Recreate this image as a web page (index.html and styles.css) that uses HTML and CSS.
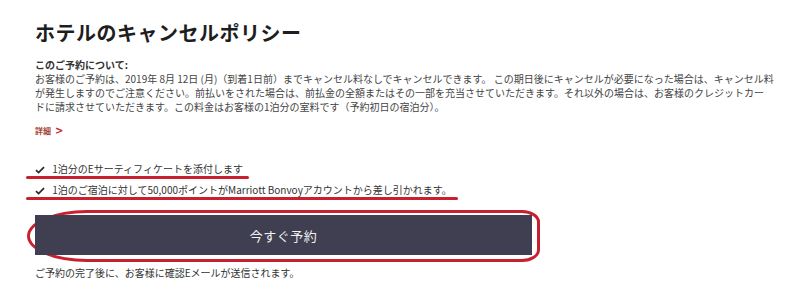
FILE: index.html
```html
<!DOCTYPE html>
<html lang="ja">
<head>
	<meta charset="UTF-8">
	<title>ホテルのキャンセルポリシー</title>
	<link rel="stylesheet" href="styles.css">
</head>
<body>
	<div id="policy">
		<h1 class="title">ホテルのキャンセルポリシー</h1>

		<div class="about">
			<p class="about-head">このご予約について:</p>
			<p class="about-text">お客様のご予約は、2019年 8月 12日 (月)（到着1日前）までキャンセル料なしでキャンセルできます。 この期日後にキャンセルが必要になった場合は、キャンセル料<br>が発生しますのでご注意ください。前払いをされた場合は、前払金の全額またはその一部を充当させていただきます。それ以外の場合は、お客様のクレジットカー<br>ドに請求させていただきます。この料金はお客様の1泊分の室料です（予約初日の宿泊分）。</p>
		</div>

		<a class="more" href="#">詳細<span class="arrow">&gt;</span></a>

		<ul class="perks">
			<li><span class="mark">
				<svg class="check" width="10" height="8" viewBox="0 0 10 8"><path d="M1 4.2 L3.6 6.6 L9 1.2" fill="none" stroke="#2b2b2b" stroke-width="1.8"/></svg>
				1泊分のEサーティフィケートを添付します</span></li>
			<li><span class="mark">
				<svg class="check" width="10" height="8" viewBox="0 0 10 8"><path d="M1 4.2 L3.6 6.6 L9 1.2" fill="none" stroke="#2b2b2b" stroke-width="1.8"/></svg>
				1泊のご宿泊に対して50,000ポイントがMarriott Bonvoyアカウントから差し引かれます。</span></li>
		</ul>

		<div class="book">
			<button class="book-btn">今すぐ予約</button>
		</div>

		<p class="note">ご予約の完了後に、お客様に確認Eメールが送信されます。</p>
	</div>
</body>
</html>
```

FILE: styles.css
```css
body{margin: 0; background: #fff; color: #333; font-family: "Noto Sans CJK JP", "Liberation Sans", sans-serif;}
p, h1, ul{margin: 0; padding: 0;}
ul{list-style: none;}
#policy{padding: 19px 0 0 35px; width: 760px;}
.title{font-size: 20px; line-height: 28px; font-weight: bold; color: #1e1e1e; letter-spacing: 0.5px;}
.about{margin-top: 11px; font-size: 10px; line-height: 14px; white-space: nowrap;}
.about-head{font-weight: bold; color: #333;}
.about-text{color: #444;}
.more{display: inline-block; margin-top: 10px; font-size: 8px; line-height: 14px; font-weight: bold; color: #a6463c; text-decoration: none;}
.more .arrow{margin-left: 4px; font-size: 10px; color: #c0283a; font-family: "DejaVu Sans", sans-serif;}
.perks{margin-top: 19px; font-size: 10px; line-height: 21px; color: #333;}
.mark{display: inline-block; position: relative; white-space: nowrap;}
.mark::after{content: ""; position: absolute; left: -9px; right: -6px; bottom: 0; height: 3px; border-radius: 2px; background: #c8202e;}
.check{margin-right: 5px; vertical-align: -1px;}
.book{margin-top: 15px; width: 497px; position: relative;}
.book::before{content: ""; position: absolute; left: -8px; right: -8px; top: -5px; bottom: -7px; border: 3px solid #c8202e; border-radius: 60px 18px 18px 60px / 26px 12px 12px 26px;}
.book-btn{display: block; width: 100%; height: 40px; border: none; background: #403e51; color: #f2f2f2; font-size: 13px; font-family: inherit; letter-spacing: 0.5px; position: relative;}
.note{margin-top: 11px; font-size: 10px; line-height: 14px; color: #333;}
```
